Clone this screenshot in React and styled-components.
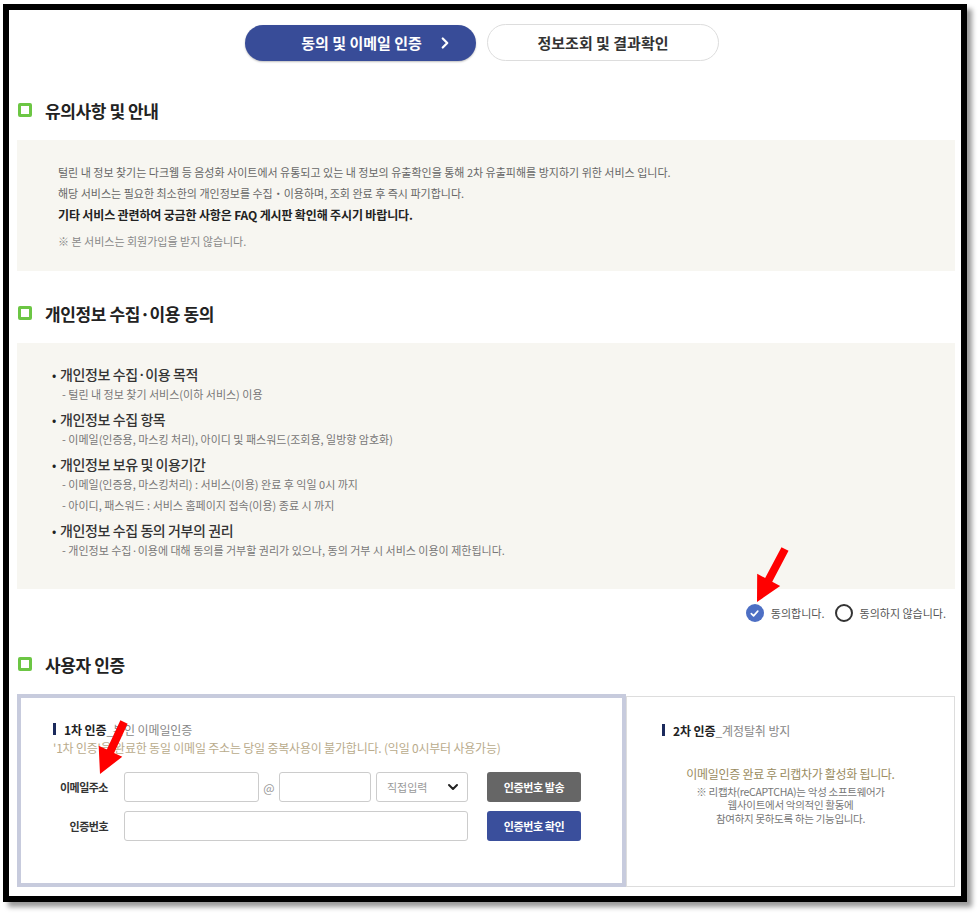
import React from "react";
import styled, { createGlobalStyle } from "styled-components";
import { ChevronRight, ChevronDown } from "lucide-react";

const GlobalStyle = createGlobalStyle`
  body {
    margin: 0;
    background: #fff;
    font-family: "Noto Sans CJK KR", "Noto Sans", sans-serif;
    color: #333;
  }
  * { box-sizing: border-box; }
`;

const Page = styled.div`
  position: relative;
  width: 980px;
  height: 914px;
  padding: 4px 0 0 3px;
  overflow: hidden;
`;

const Frame = styled.div`
  width: 964px;
  height: 898px;
  border: 6px solid #000;
  box-shadow: 5px 5px 5px rgba(0, 0, 0, 0.4);
  background: #fff;
  padding: 14px 6px 0 8px;
  overflow: hidden;
`;

const Tabs = styled.div`
  display: flex;
  justify-content: center;
  align-items: center;
  gap: 11px;
  padding-right: 8px;
`;

const Tab = styled.div`
  width: ${(p) => (p.$active ? 231 : 232)}px;
  height: ${(p) => (p.$active ? 36 : 37)}px;
  border-radius: 19px;
  display: flex;
  align-items: center;
  justify-content: center;
  gap: 14px;
  padding-left: ${(p) => (p.$active ? 34 : 0)}px;
  font-size: 15px;
  font-weight: 700;
  letter-spacing: 0;
  background: ${(p) => (p.$active ? "#384c98" : "#fff")};
  color: ${(p) => (p.$active ? "#fff" : "#333")};
  border: ${(p) => (p.$active ? "none" : "1px solid #ddd")};
  box-shadow: ${(p) => (p.$active ? "0 1px 2px rgba(0,0,0,0.25)" : "none")};
`;

const Heading = styled.h2`
  display: flex;
  align-items: center;
  gap: 13px;
  margin: ${(p) => p.$top}px 0 20px;
  padding-left: 1px;
  height: 20px;
  font-size: 17px;
  font-weight: 700;
  letter-spacing: -0.4px;
  color: #222;
`;

const Square = styled.span`
  width: 14px;
  height: 14px;
  border: 3px solid #6cc644;
  border-radius: 2px;
`;

const InfoBox = styled.div`
  background: #f7f6f1;
  padding: 22px 20px 19px 41px;
`;

const InfoLine = styled.p`
  margin: ${(p) => (p.$gap ? "6px" : "0")} 0 0;
  line-height: 21px;
  height: 21px;
  font-size: ${(p) => (p.$strong ? "12px" : "11px")};
  font-weight: ${(p) => (p.$strong ? 700 : 400)};
  letter-spacing: ${(p) => (p.$strong ? "-0.15px" : "0")};
  color: ${(p) => p.$color || "#666"};
`;

const AgreeBox = styled.ul`
  list-style: none;
  margin: 0;
  background: #f7f6f1;
  padding: 21px 20px 30px 35px;
  display: flex;
  flex-direction: column;
  gap: 6px;
`;

const Item = styled.li`
  display: flex;
  flex-direction: column;
`;

const ItemTitle = styled.div`
  display: flex;
  align-items: center;
  height: 20px;
  font-size: 14px;
  font-weight: 500;
  letter-spacing: -0.4px;
  color: #333;
  &::before {
    content: "•";
    width: 8px;
    font-size: 12px;
    color: #222;
  }
`;

const ItemSub = styled.div`
  display: flex;
  align-items: center;
  height: 19px;
  padding-left: 10px;
  margin-top: ${(p) => (p.$more ? 2 : 0)}px;
  font-size: 11px;
  color: #777;
`;

const RadioRow = styled.div`
  display: flex;
  justify-content: flex-end;
  align-items: center;
  height: 20px;
  margin-top: 14px;
  padding-right: 9px;
`;

const RadioLabel = styled.label`
  display: flex;
  align-items: center;
  gap: 7px;
  margin-left: 10px;
  font-size: 11px;
  color: #555;
`;

const RadioDot = styled.span`
  width: 18px;
  height: 18px;
  border-radius: 50%;
  display: flex;
  align-items: center;
  justify-content: center;
  background: ${(p) => (p.$checked ? "#4d6fc4" : "#fff")};
  border: ${(p) => (p.$checked ? "none" : "2px solid #333")};
`;

const AuthGrid = styled.div`
  display: grid;
  grid-template-columns: 609px 1fr;
  height: 193px;
`;

const AuthPanel = styled.div`
  border: ${(p) => (p.$main ? "4px solid #c7cbdd" : "1px solid #ddd")};
  margin-top: ${(p) => (p.$main ? 0 : 2)}px;
  padding: ${(p) => (p.$main ? "22px 20px 0 32px" : "24px 20px 0 35px")};
`;

const AuthTitle = styled.div`
  display: flex;
  align-items: center;
  height: 18px;
  font-size: 12px;
  letter-spacing: -0.1px;
  color: #888;
  &::before {
    content: "";
    width: 3px;
    height: 12px;
    background: #1b2a5c;
    margin-right: 8px;
  }
  b {
    color: #222;
    font-weight: 700;
  }
`;

const Note = styled.div`
  margin-top: 1px;
  height: 18px;
  line-height: 18px;
  font-size: 12px;
  letter-spacing: -0.2px;
  color: #b9ab8c;
`;

const FormGrid = styled.div`
  display: grid;
  grid-template-columns: 71px 135px 20px 92px 97px 113px;
  row-gap: 9px;
  margin-top: 15px;
  align-items: center;
`;

const FieldLabel = styled.div`
  text-align: right;
  padding-right: 16px;
  font-size: 11px;
  font-weight: 700;
  letter-spacing: -0.5px;
  color: #333;
`;

const Input = styled.div`
  height: 30px;
  border: 1px solid #ccc;
  border-radius: 3px;
  background: #fff;
  grid-column: ${(p) => p.$span || "auto"};
`;

const At = styled.span`
  text-align: center;
  font-size: 12px;
  color: #999;
`;

const Select = styled.div`
  height: 30px;
  margin-left: 5px;
  border: 1px solid #ccc;
  border-radius: 3px;
  display: flex;
  align-items: center;
  justify-content: space-between;
  padding: 0 6px 0 10px;
  font-size: 11px;
  color: #999;
`;

const Button = styled.button`
  height: 30px;
  margin-left: 19px;
  width: 94px;
  border: none;
  border-radius: 3px;
  background: ${(p) => (p.$primary ? "#3a4f9c" : "#666")};
  color: #fff;
  font-family: inherit;
  font-size: 11px;
  font-weight: 700;
  letter-spacing: -0.4px;
  grid-column: 6;
`;

const CaptchaText = styled.div`
  margin-top: 28px;
  margin-left: -35px;
  margin-right: -20px;
  text-align: center;
  font-size: 10.5px;
  letter-spacing: -0.3px;
  line-height: 13.5px;
  color: #777;
  p {
    margin: 0;
  }
  strong {
    display: block;
    margin-bottom: 4px;
    font-size: 12px;
    font-weight: 400;
    color: #9a8b5e;
  }
`;

const Overlay = styled.svg`
  position: absolute;
  inset: 0;
  pointer-events: none;
`;

function arrowPoints(x1, y1, x2, y2) {
  const shaft = 4;
  const headW = 13;
  const headL = 25;
  const dx = x2 - x1;
  const dy = y2 - y1;
  const len = Math.hypot(dx, dy);
  const ux = dx / len;
  const uy = dy / len;
  const px = -uy;
  const py = ux;
  const bx = x2 - ux * headL;
  const by = y2 - uy * headL;
  return [
    [x1 + px * shaft, y1 + py * shaft],
    [bx + px * shaft, by + py * shaft],
    [bx + px * headW, by + py * headW],
    [x2, y2],
    [bx - px * headW, by - py * headW],
    [bx - px * shaft, by - py * shaft],
    [x1 - px * shaft, y1 - py * shaft],
  ]
    .map((p) => p.join(","))
    .join(" ");
}

const arrows = [
  { x1: 785, y1: 549, x2: 757, y2: 602 },
  { x1: 124, y1: 722, x2: 100, y2: 774 },
];

export default function App() {
  return (
    <Page>
      <GlobalStyle />
      <Frame>
        <Tabs>
          <Tab $active>
            동의 및 이메일 인증
            <ChevronRight size={18} strokeWidth={3} />
          </Tab>
          <Tab>정보조회 및 결과확인</Tab>
        </Tabs>

        <Heading $top={39}>
          <Square />
          유의사항 및 안내
        </Heading>
        <InfoBox>
          <InfoLine>
            털린 내 정보 찾기는 다크웹 등 음성화 사이트에서 유통되고 있는 내 정보의
            유출확인을 통해 2차 유출피해를 방지하기 위한 서비스 입니다.
          </InfoLine>
          <InfoLine>
            해당 서비스는 필요한 최소한의 개인정보를 수집・이용하며, 조회 완료 후 즉시
            파기합니다.
          </InfoLine>
          <InfoLine $strong $color="#222">
            기타 서비스 관련하여 궁금한 사항은 FAQ 게시판 확인해 주시기 바랍니다.
          </InfoLine>
          <InfoLine $gap $color="#888">
            ※ 본 서비스는 회원가입을 받지 않습니다.
          </InfoLine>
        </InfoBox>

        <Heading $top={32}>
          <Square />
          개인정보 수집·이용 동의
        </Heading>
        <AgreeBox>
          <Item>
            <ItemTitle>개인정보 수집·이용 목적</ItemTitle>
            <ItemSub>- 털린 내 정보 찾기 서비스(이하 서비스) 이용</ItemSub>
          </Item>
          <Item>
            <ItemTitle>개인정보 수집 항목</ItemTitle>
            <ItemSub>
              - 이메일(인증용, 마스킹 처리), 아이디 및 패스워드(조회용, 일방향 암호화)
            </ItemSub>
          </Item>
          <Item>
            <ItemTitle>개인정보 보유 및 이용기간</ItemTitle>
            <ItemSub>- 이메일(인증용, 마스킹처리) : 서비스(이용) 완료 후 익일 0시 까지</ItemSub>
            <ItemSub $more>- 아이디, 패스워드 : 서비스 홈페이지 접속(이용) 종료 시 까지</ItemSub>
          </Item>
          <Item>
            <ItemTitle>개인정보 수집 동의 거부의 권리</ItemTitle>
            <ItemSub>
              - 개인정보 수집·이용에 대해 동의를 거부할 권리가 있으나, 동의 거부 시 서비스
              이용이 제한됩니다.
            </ItemSub>
          </Item>
        </AgreeBox>

        <RadioRow>
          <RadioLabel>
            <RadioDot $checked>
              <svg width="11" height="11" viewBox="0 0 12 12">
                <path
                  d="M2.5 6.2 L5 8.6 L9.6 3.4"
                  fill="none"
                  stroke="#fff"
                  strokeWidth="1.8"
                  strokeLinecap="round"
                  strokeLinejoin="round"
                />
              </svg>
            </RadioDot>
            동의합니다.
          </RadioLabel>
          <RadioLabel>
            <RadioDot />
            동의하지 않습니다.
          </RadioLabel>
        </RadioRow>

        <Heading $top={31}>
          <Square />
          사용자 인증
        </Heading>
        <AuthGrid>
          <AuthPanel $main>
            <AuthTitle>
              <b>1차 인증</b>_본인 이메일인증
            </AuthTitle>
            <Note>
              '1차 인증'을 완료한 동일 이메일 주소는 당일 중복사용이 불가합니다. (익일
              0시부터 사용가능)
            </Note>
            <FormGrid>
              <FieldLabel>이메일주소</FieldLabel>
              <Input />
              <At>@</At>
              <Input />
              <Select>
                직접입력
                <ChevronDown size={16} strokeWidth={3} color="#222" />
              </Select>
              <Button>인증번호 발송</Button>
              <FieldLabel>인증번호</FieldLabel>
              <Input $span="2 / 6" />
              <Button $primary>인증번호 확인</Button>
            </FormGrid>
          </AuthPanel>
          <AuthPanel>
            <AuthTitle>
              <b>2차 인증</b>_계정탈취 방지
            </AuthTitle>
            <CaptchaText>
              <strong>이메일인증 완료 후 리캡차가 활성화 됩니다.</strong>
              <p>※ 리캡차(reCAPTCHA)는 악성 소프트웨어가</p>
              <p>웹사이트에서 악의적인 활동에</p>
              <p>참여하지 못하도록 하는 기능입니다.</p>
            </CaptchaText>
          </AuthPanel>
        </AuthGrid>
      </Frame>

      <Overlay width="980" height="914">
        {arrows.map((a, i) => (
          <polygon key={i} points={arrowPoints(a.x1, a.y1, a.x2, a.y2)} fill="#f00" />
        ))}
      </Overlay>
    </Page>
  );
}
